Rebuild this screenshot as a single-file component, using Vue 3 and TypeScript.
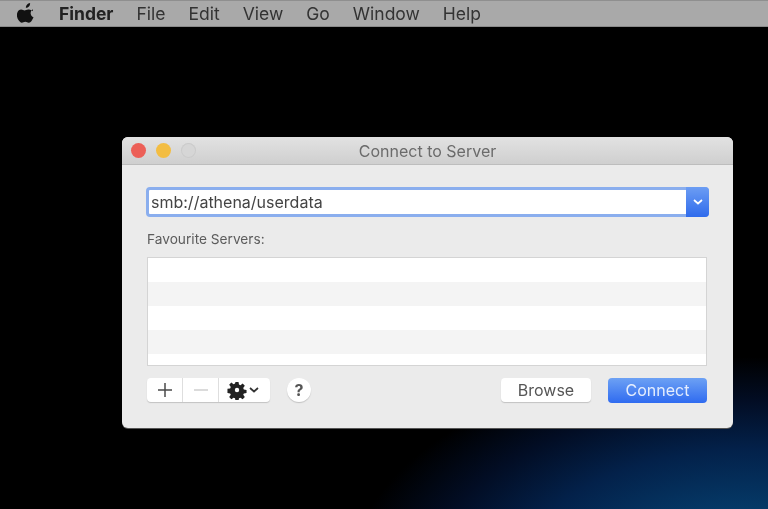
<script setup lang="ts">
const menus = ['File', 'Edit', 'View', 'Go', 'Window', 'Help']
const rows = [1, 2, 3, 4, 5]
</script>

<template>
  <div class="screen">
    <div class="menubar">
      <svg class="apple" viewBox="0 0 170 200" width="18" height="21">
        <path d="M150 68c-1 1-21 12-21 37 0 29 26 39 27 40-.3.6-4 14-14 28-8 12-17 24-31 24-13 0-17-8-33-8-15 0-21 8-33 8-13 0-22-11-32-25C2 155-8 128 3 99c6-17 20-28 36-28 13 0 24 9 32 9 8 0 20-9 35-9 6 0 27 .5 44 18zM113 43c6-8 11-18 11-29 0-1.500-.1-3-.4-4-10 .4-22 7-29 15-6 6-11 17-11 27 0 1.500.3 3 .4 3.500.6.1 1.600.3 2.600.3 9 0 20-6 26-13z" />
      </svg>
      <span class="menu menu--app">Finder</span>
      <span v-for="m in menus" :key="m" class="menu">{{ m }}</span>
    </div>

    <div class="desktop">
      <div class="window">
        <div class="titlebar">
          <div class="lights">
            <span class="light light--red"></span>
            <span class="light light--yellow"></span>
            <span class="light light--off"></span>
          </div>
          <div class="title">Connect to Server</div>
        </div>

        <div class="content">
          <div class="combo">
            <div class="combo-input">smb://athena/userdata</div>
            <div class="combo-btn">
              <svg viewBox="0 0 10 6" width="10" height="6">
                <path d="M1 1l4 3.500L9 1" fill="none" stroke="#fff" stroke-width="1.700" />
              </svg>
            </div>
          </div>

          <div class="label">Favourite Servers:</div>

          <div class="list">
            <div v-for="r in rows" :key="r" class="row"></div>
          </div>

          <div class="toolbar">
            <div class="seg">
              <div class="seg-btn seg-btn--add">
                <svg viewBox="0 0 16 16" width="16" height="16">
                  <path d="M8 1v14M1 8h14" stroke="#4a4a4a" stroke-width="1.500" />
                </svg>
              </div>
              <div class="seg-btn seg-btn--remove">
                <svg viewBox="0 0 16 16" width="16" height="16">
                  <path d="M1 8h14" stroke="#cfcfcf" stroke-width="1.500" />
                </svg>
              </div>
              <div class="seg-btn seg-btn--gear">
                <svg viewBox="0 0 20 20" width="20" height="20">
                  <path fill="#222" d="M8.300 1h3.400l.5 3 1.600.7 2.500-1.800 2.400 2.400-1.800 2.500.7 1.600 3 .5v3.400l-3 .5-.7 1.600 1.800 2.500-2.400 2.400-2.500-1.800-1.600.7-.5 3H8.300l-.5-3-1.600-.7-2.500 1.800-2.400-2.400 1.800-2.500-.7-1.600-3-.5V8.700l3-.5.700-1.600-1.800-2.500 2.400-2.400 2.500 1.800 1.600-.7z" transform="translate(1 1) scale(.9)" />
                  <circle cx="10" cy="10" r="2.200" fill="#fff" />
                </svg>
                <svg viewBox="0 0 10 6" width="10" height="6">
                  <path d="M1 1l4 3.500L9 1" fill="none" stroke="#333" stroke-width="1.700" />
                </svg>
              </div>
            </div>
            <div class="help">?</div>
            <div class="spacer"></div>
            <div class="btn">Browse</div>
            <div class="btn btn--primary">Connect</div>
          </div>
        </div>
      </div>
    </div>
  </div>
</template>

<style scoped>
.screen {
  width: 768px;
  height: 509px;
  overflow: hidden;
  display: flex;
  flex-direction: column;
  font-family: Inter, "Liberation Sans", Arial, sans-serif;
  filter: blur(0.7px);
}

.menubar {
  height: 27px;
  box-sizing: border-box;
  flex: none;
  display: flex;
  align-items: center;
  padding-left: 17px;
  background: #a9a9a9;
  border-top: 1px solid #8f8f8f;
  border-bottom: 1px solid #8a8a8a;
  color: #333;
  font-size: 17.500px;
}

.apple {
  fill: #111;
  margin-right: 24px;
  margin-top: -3px;
}

.menu {
  margin-right: 23px;
}

.menu--app {
  font-weight: 700;
  color: #222;
}

.desktop {
  flex: 1;
  padding: 110px 35px 0 122px;
  background:
    radial-gradient(ellipse 400px 220px at 750px 550px, #064a78 0%, #053a68 30%, #03214a 58%, #020d24 80%, #000 100%),
    #000;
}

.window {
  height: 291px;
  display: flex;
  flex-direction: column;
  border-radius: 6px;
  overflow: hidden;
  background: #ebebeb;
  box-shadow: 0 1px 0 #555;
}

.titlebar {
  height: 28px;
  flex: none;
  position: relative;
  display: flex;
  align-items: center;
  justify-content: center;
  background: linear-gradient(#e2e2e2, #cfcfcf);
  border-bottom: 1px solid #bdbdbd;
  box-sizing: border-box;
}

.lights {
  position: absolute;
  left: 9px;
  top: 6px;
  display: flex;
  gap: 10px;
}

.light {
  width: 15px;
  height: 15px;
  border-radius: 50%;
}

.light--red {
  background: #ec5f57;
}

.light--yellow {
  background: #f3bd42;
}

.light--off {
  background: #d6d6d6;
  box-shadow: inset 0 0 0 1px #cbcbcb;
}

.title {
  font-size: 16px;
  color: #6b6b6b;
}

.content {
  flex: 1;
  display: flex;
  flex-direction: column;
  padding: 22px 24px 0;
}

.combo {
  height: 30px;
  display: flex;
  box-sizing: border-box;
  border: 3px solid #8aaeee;
  border-radius: 4px;
  background: #fff;
}

.combo-input {
  flex: 1;
  padding-left: 2px;
  line-height: 25px;
  font-size: 16px;
  color: #444;
}

.combo-btn {
  width: 23px;
  margin: -3px -3px -3px 0;
  display: flex;
  align-items: center;
  justify-content: center;
  border-radius: 0 4px 4px 0;
  background: linear-gradient(#6c9df3, #2f6bec);
}

.label {
  margin: 13px 0 0 1px;
  height: 19px;
  line-height: 19px;
  font-size: 13.700px;
  color: #5c5c5c;
}

.list {
  margin: 8px 2px 0 1px;
  height: 109px;
  box-sizing: border-box;
  overflow: hidden;
  background: #fff;
  border: 1px solid #d4d4d4;
}

.row {
  height: 24px;
  background: #fff;
}

.row:nth-child(even) {
  background: #f4f4f4;
}

.toolbar {
  margin: 12px 2px 0 1px;
  height: 24px;
  display: flex;
  align-items: center;
}

.seg {
  display: flex;
  height: 24px;
  border-radius: 4px;
  background: #fff;
  box-shadow: 0 1px 1px #c2c2c2;
}

.seg-btn {
  display: flex;
  align-items: center;
  justify-content: center;
  box-sizing: border-box;
  border-right: 1px solid #dedede;
}

.seg-btn--add {
  width: 36px;
}

.seg-btn--remove {
  width: 36px;
}

.seg-btn--gear {
  width: 51px;
  gap: 2px;
  padding-right: 3px;
  border-right: none;
}

.help {
  width: 24px;
  height: 24px;
  margin-left: 17px;
  border-radius: 50%;
  background: #fff;
  box-shadow: 0 1px 1px #c2c2c2;
  text-align: center;
  line-height: 24px;
  font-size: 16px;
  font-weight: 700;
  color: #555;
}

.spacer {
  flex: 1;
}

.btn {
  width: 90px;
  height: 24px;
  margin-left: 17px;
  border-radius: 4px;
  background: #fff;
  box-shadow: 0 1px 1px #c2c2c2;
  text-align: center;
  line-height: 24px;
  font-size: 16px;
  color: #555;
}

.btn--primary {
  width: 99px;
  height: 25px;
  background: linear-gradient(#6da1f4, #2f6bf0);
  box-shadow: none;
  color: #e4edfd;
}
</style>

<style>
html,
body {
  margin: 0;
  background: #000;
}
</style>
